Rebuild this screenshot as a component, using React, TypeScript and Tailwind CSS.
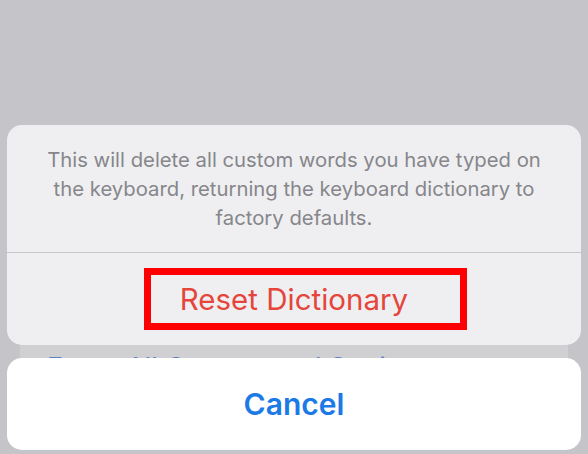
import React from 'react';

const App: React.FC = () => {
  return (
    <div
      className="w-[588px] h-[454px] bg-[#c5c5c9] flex flex-col justify-end px-[7px] pb-[4px] overflow-hidden"
      style={{ fontFamily: 'Inter, "Liberation Sans", sans-serif' }}
    >
      {/* Action sheet */}
      <div className="h-[220px] rounded-[15px] bg-[#efeff1] flex flex-col">
        <div className="h-[127px] px-8 pt-[20px] text-center text-[20.3px] leading-[29px] text-[#86868b]">
          This will delete all custom words you have typed on the keyboard, returning the keyboard dictionary to
          factory defaults.
        </div>
        <div className="h-px bg-[#c6c6ca]" />
        <div className="relative flex-1 flex items-center justify-center">
          <span className="text-[29.5px] text-[#e5453b]">Reset Dictionary</span>
          {/* annotation box */}
          <div className="absolute left-[137px] top-[15px] w-[323px] h-[62px] border-[7px] border-[#ff0000]" />
        </div>
      </div>

      {/* list row peeking through behind the sheet */}
      <div className="h-[13px] mx-[13px] bg-[#d0d0d3] overflow-hidden">
        <div className="pl-[27px] pt-[9px] text-[27px] leading-none text-[#5c80c4] whitespace-nowrap">
          Erase All Content and Settings
        </div>
      </div>

      <div className="h-[92px] rounded-[15px] bg-white flex items-center justify-center">
        <span className="text-[30px] font-semibold text-[#1b7ae6]">Cancel</span>
      </div>
    </div>
  );
};

export default App;
